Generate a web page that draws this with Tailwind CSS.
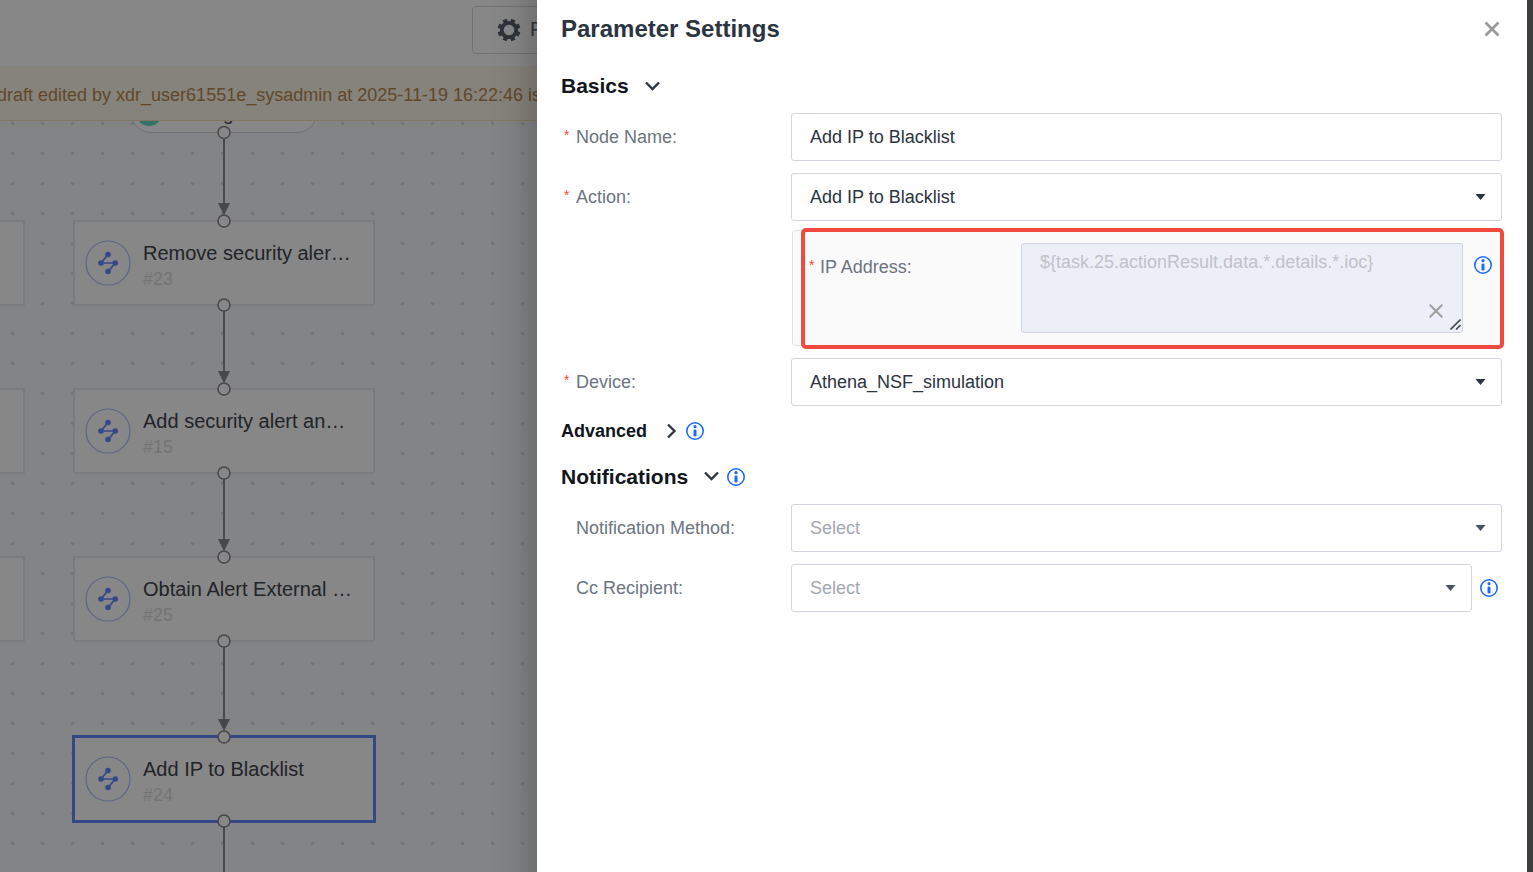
<!DOCTYPE html>
<html lang="en">
<head>
    <meta charset="UTF-8">
    <meta name="viewport" content="width=device-width, initial-scale=1.0">
    <title>Parameter Settings</title>
    <script src="https://cdn.jsdelivr.net/npm/@tailwindcss/browser@4"></script>
</head>
<body class="relative h-screen overflow-hidden bg-white font-['Liberation_Sans',Arial,sans-serif] text-lg text-[#2b3440]">

    <!-- Shared icons -->
    <svg class="hidden">
        <symbol id="icon-info" viewBox="0 0 20 20">
            <circle cx="10" cy="10" r="8.2" fill="none" stroke="#1a6bff" stroke-width="1.6"/>
            <circle cx="10" cy="5.7" r="1.6" fill="#1a6bff"/>
            <rect x="8.5" y="8.4" width="3" height="7.2" rx="1.3" fill="#1a6bff"/>
        </symbol>
        <symbol id="icon-caret" viewBox="0 0 10 6">
            <path d="M0 0h10L5 6z" fill="currentColor"/>
        </symbol>
        <symbol id="icon-chevron" viewBox="0 0 16 16">
            <path d="M1 3.500L7.500 10l6.500-6.500" fill="none" stroke="currentColor" stroke-width="2.300"/>
        </symbol>
        <symbol id="icon-node" viewBox="0 0 46 46">
            <circle cx="23" cy="23" r="22" fill="none" stroke="#a9bdff" stroke-width="1.2"/>
            <path d="M23 14.500L16 23h14.300L23 31.500" fill="none" stroke="#6389ff" stroke-width="1.700"/>
            <g fill="#6389ff">
                <circle cx="23" cy="14.500" r="2.800"/>
                <circle cx="16" cy="23" r="2.800"/>
                <circle cx="30.300" cy="23" r="2.800"/>
                <circle cx="23" cy="31.500" r="2.800"/>
            </g>
        </symbol>
    </svg>

    <!-- Playbook editor -->
    <div class="flex h-full flex-col">
        <header class="flex h-[66px] shrink-0 items-start bg-white pt-[6px] pl-[472px]">
            <button class="flex h-12 w-[150px] items-center gap-[9px] rounded border border-[#d3d6de] pl-6 text-[20px] text-[#5c6470]">
                <svg class="size-6" viewBox="0 0 24 24" fill="none" stroke="#59606c">
                    <circle cx="12" cy="12" r="7.200" stroke-width="3.800"/>
                    <g stroke-width="4.400">
                        <path d="M12 .6v3.400M12 20v3.400M.6 12h3.400M20 12h3.400" transform="rotate(22.500 12 12)"/>
                        <path d="M12 .6v3.400M12 20v3.400M.6 12h3.400M20 12h3.400" transform="rotate(67.500 12 12)"/>
                    </g>
                </svg>
                P
            </button>
        </header>
        <div class="flex h-[55px] shrink-0 items-center border-b border-[#f5dfb8] bg-[#fdf7ea] pt-[3px] whitespace-nowrap text-[#b9894e]">
            <span class="-ml-[3px]">draft edited by xdr_user61551e_sysadmin at 2025-11-19 16:22:46 is</span>
        </div>

        <main class="relative grow overflow-hidden bg-[#f7f9fb]">
            <svg class="absolute inset-0 h-full w-full">
                <defs>
                    <pattern id="dots" width="30" height="30" patternUnits="userSpaceOnUse">
                        <circle cx="12.500" cy="2.500" r="1.700" fill="#dadce0"/>
                    </pattern>
                </defs>
                <rect width="100%" height="100%" fill="url(#dots)"/>
            </svg>

            <div class="absolute top-[-48px] left-[131px] flex h-[60px] w-[186px] items-end rounded-[20px] border border-[#d5d8e4] bg-white pb-[6px] pl-1">
                <span class="size-[26px] rounded-full bg-[#5cdcc8]"></span>
                <span class="ml-[6px] text-[19px] leading-6 text-[#40444c]">Starting</span>
            </div>

            <div class="absolute top-[99px] -left-[277px] h-[86px] w-[302px] border-2 border-[#e6e8f0] bg-white"></div>
            <div class="absolute top-[267px] -left-[277px] h-[86px] w-[302px] border-2 border-[#e6e8f0] bg-white"></div>
            <div class="absolute top-[435px] -left-[277px] h-[86px] w-[302px] border-2 border-[#e6e8f0] bg-white"></div>

            <div class="absolute top-[99px] left-[73px] flex h-[86px] w-[302px] items-center gap-3 border-2 border-[#e6e8f0] bg-white pl-[10px]">
                <svg class="size-[46px] shrink-0"><use href="#icon-node"/></svg>
                <div class="pt-[6px]">
                    <div class="text-[20px] leading-[26px] text-[#40444c]">Remove security aler…</div>
                    <div class="leading-[26px] text-[#dcdcdc]">#23</div>
                </div>
            </div>
            <div class="absolute top-[267px] left-[73px] flex h-[86px] w-[302px] items-center gap-3 border-2 border-[#e6e8f0] bg-white pl-[10px]">
                <svg class="size-[46px] shrink-0"><use href="#icon-node"/></svg>
                <div class="pt-[6px]">
                    <div class="text-[20px] leading-[26px] text-[#40444c]">Add security alert an…</div>
                    <div class="leading-[26px] text-[#dcdcdc]">#15</div>
                </div>
            </div>
            <div class="absolute top-[435px] left-[73px] flex h-[86px] w-[302px] items-center gap-3 border-2 border-[#e6e8f0] bg-white pl-[10px]">
                <svg class="size-[46px] shrink-0"><use href="#icon-node"/></svg>
                <div class="pt-[6px]">
                    <div class="text-[20px] leading-[26px] text-[#40444c]">Obtain Alert External …</div>
                    <div class="leading-[26px] text-[#dcdcdc]">#25</div>
                </div>
            </div>
            <div class="absolute top-[614px] left-[72px] flex h-[88px] w-[304px] items-center gap-3 border-3 border-[#6389ff] bg-white pl-[10px]">
                <svg class="size-[46px] shrink-0"><use href="#icon-node"/></svg>
                <div class="pt-[6px]">
                    <div class="text-[20px] leading-[26px] text-[#40444c]">Add IP to Blacklist</div>
                    <div class="leading-[26px] text-[#dcdcdc]">#24</div>
                </div>
            </div>

            <!-- Connectors between nodes -->
            <svg class="absolute inset-0 h-full w-full">
                <g stroke="#8c8c8c" stroke-width="2">
                    <path d="M224 17v70M224 190v66M224 358v66M224 526v78M224 706v60"/>
                </g>
                <g fill="#868686">
                    <path d="M218 82h12l-6 12zM218 250h12l-6 12zM218 418h12l-6 12zM218 598h12l-6 12z"/>
                </g>
                <g fill="#fff" stroke="#868686" stroke-width="1.500">
                    <circle cx="224" cy="11.500" r="6"/>
                    <circle cx="224" cy="100" r="6"/>
                    <circle cx="224" cy="184" r="6"/>
                    <circle cx="224" cy="268" r="6"/>
                    <circle cx="224" cy="352" r="6"/>
                    <circle cx="224" cy="436" r="6"/>
                    <circle cx="224" cy="520" r="6"/>
                    <circle cx="224" cy="616" r="6"/>
                    <circle cx="224" cy="700" r="6"/>
                </g>
            </svg>
        </main>
    </div>

    <!-- Drawer -->
    <div class="absolute inset-0 flex justify-end bg-black/47">
        <div class="w-12 bg-linear-to-l from-black/16 via-black/4 to-transparent"></div>
        <aside class="w-[990px] max-w-full bg-white pr-[25px] pl-6">
            <div class="flex h-[58px] items-center justify-between">
                <h1 class="text-2xl font-bold">Parameter Settings</h1>
                <button aria-label="Close" class="mr-[2px] text-[#9a9a9a]">
                    <svg class="size-4" viewBox="0 0 16 16"><path d="M1.500 1.500l13 13M14.500 1.500l-13 13" stroke="currentColor" stroke-width="2.800"/></svg>
                </button>
            </div>

            <form>
                <h2 class="flex h-[55px] items-center gap-4 pt-[2px] text-[21px] font-bold text-[#11151c]">
                    Basics
                    <svg class="size-4 text-[#2b3440]"><use href="#icon-chevron"/></svg>
                </h2>

                <div class="flex flex-col gap-3">
                    <div class="flex items-center">
                        <label for="node-name" class="flex w-[230px] shrink-0 pl-[3px] text-[#6c7480]"><span class="w-3 text-sm/6 text-[#f04b40]">*</span>Node Name:</label>
                        <input id="node-name" type="text" value="Add IP to Blacklist" class="h-12 w-full rounded-[3px] border border-[#d3d6de] px-[18px]">
                    </div>

                    <div>
                        <div class="flex items-center">
                            <label for="action" class="flex w-[230px] shrink-0 pl-[3px] text-[#6c7480]"><span class="w-3 text-sm/6 text-[#f04b40]">*</span>Action:</label>
                            <div class="relative grow">
                                <select id="action" class="h-12 w-full appearance-none rounded-[3px] border border-[#d3d6de] px-[18px]">
                                    <option>Add IP to Blacklist</option>
                                </select>
                                <svg class="pointer-events-none absolute top-[21px] right-4 h-[6px] w-[11px]"><use href="#icon-caret"/></svg>
                            </div>
                        </div>

                        <div class="relative mt-[9px] ml-[231px] flex items-start rounded-[3px] border border-[#e2e2e4] bg-[#fafafa] py-3 pr-2 pl-4">
                            <label for="ip-address" class="mt-[10px] flex w-[212px] shrink-0 text-[#6c7480]"><span class="w-[11px] text-sm/6 text-[#f04b40]">*</span>IP Address:</label>
                            <div class="relative h-[90px] grow">
                                <textarea id="ip-address" placeholder="${task.25.actionResult.data.*.details.*.ioc}" class="block h-full w-full resize-none rounded-[3px] border border-[#d0d4e0] bg-[#eceff7] px-[18px] py-1 placeholder:text-[#bfc2ca]"></textarea>
                                <button type="button" aria-label="Clear" class="absolute right-5 bottom-[15px] text-[#a0a0a0]">
                                    <svg class="size-[14px]" viewBox="0 0 14 14"><path d="M.7.7l12.600 12.600M13.300.7L.7 13.300" stroke="currentColor" stroke-width="2.100"/></svg>
                                </button>
                                <svg class="pointer-events-none absolute right-[2px] bottom-[3px] size-[11px]" viewBox="0 0 11 11"><path d="M.5 10.500l10-10M6 10.500l4.500-4.500" stroke="#4a4a4a" stroke-width="1.600"/></svg>
                            </div>
                            <svg class="mt-3 ml-[10px] size-5 shrink-0"><use href="#icon-info"/></svg>
                            <div class="pointer-events-none absolute -top-[3px] -right-[3px] -bottom-[4px] left-[8px] rounded-[5px] border-4 border-[#f0493e]"></div>
                        </div>
                    </div>

                    <div class="flex items-center">
                        <label for="device" class="flex w-[230px] shrink-0 pl-[3px] text-[#6c7480]"><span class="w-3 text-sm/6 text-[#f04b40]">*</span>Device:</label>
                        <div class="relative grow">
                            <select id="device" class="h-12 w-full appearance-none rounded-[3px] border border-[#d3d6de] px-[18px]">
                                <option>Athena_NSF_simulation</option>
                            </select>
                            <svg class="pointer-events-none absolute top-[21px] right-4 h-[6px] w-[11px]"><use href="#icon-caret"/></svg>
                        </div>
                    </div>
                </div>

                <h2 class="flex h-[50px] items-center text-lg font-bold text-[#11151c]">
                    Advanced
                    <svg class="ml-4 size-4" viewBox="0 0 16 16"><path d="M5 1.500L11.500 8 5 14.500" fill="none" stroke="#2b3440" stroke-width="2.300"/></svg>
                    <svg class="ml-[6px] size-5"><use href="#icon-info"/></svg>
                </h2>
                <h2 class="mb-[6px] flex h-[42px] items-center text-[21px] font-bold text-[#11151c]">
                    Notifications
                    <svg class="ml-4 size-4 text-[#2b3440]"><use href="#icon-chevron"/></svg>
                    <svg class="ml-[6px] size-5"><use href="#icon-info"/></svg>
                </h2>

                <div class="flex flex-col gap-3">
                    <div class="flex items-center">
                        <label for="method" class="w-[230px] shrink-0 pl-[15px] text-[#6c7480]">Notification Method:</label>
                        <div class="relative grow">
                            <select id="method" class="h-12 w-full appearance-none rounded-[3px] border border-[#d3d6de] px-[18px] text-[#a3a8b0]">
                                <option>Select</option>
                            </select>
                            <svg class="pointer-events-none absolute top-[21px] right-4 h-[6px] w-[11px] text-[#4b5260]"><use href="#icon-caret"/></svg>
                        </div>
                    </div>
                    <div class="flex items-center">
                        <label for="cc" class="w-[230px] shrink-0 pl-[15px] text-[#6c7480]">Cc Recipient:</label>
                        <div class="relative grow">
                            <select id="cc" class="h-12 w-full appearance-none rounded-[3px] border border-[#d3d6de] px-[18px] text-[#a3a8b0]">
                                <option>Select</option>
                            </select>
                            <svg class="pointer-events-none absolute top-[21px] right-4 h-[6px] w-[11px] text-[#4b5260]"><use href="#icon-caret"/></svg>
                        </div>
                        <svg class="mr-[3px] ml-[7px] size-5 shrink-0"><use href="#icon-info"/></svg>
                    </div>
                </div>
            </form>
        </aside>
        <div class="w-[6px] shrink-0 bg-[#3a3d3c]"></div>
    </div>

</body>
</html>
